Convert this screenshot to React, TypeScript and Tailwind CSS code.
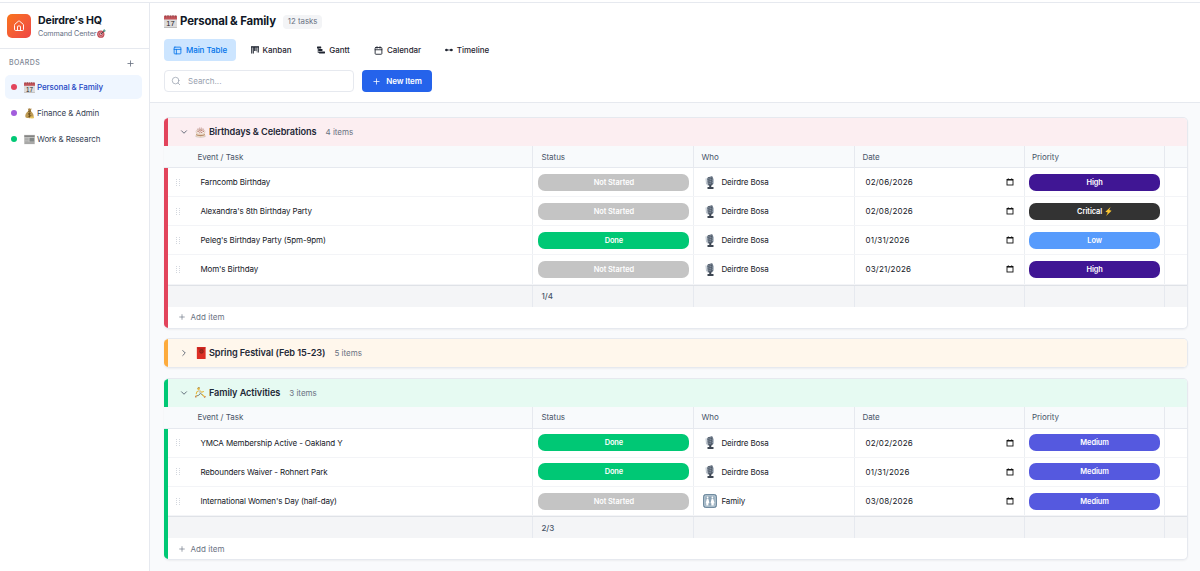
import { useState, type ReactNode } from "react";
import { Calendar, ChevronDown, ChevronRight, House, PanelsTopLeft, Plus, Search } from "lucide-react";

type Task = { name: string; status: string; who: string; date: string; priority: string };

type Group = {
  title: string;
  icon: ReactNode;
  count: number;
  open: boolean;
  bar: string;
  tint: string;
  summary?: string;
  tasks: Task[];
};

const COLS = "grid grid-cols-[365px_161px_160.500px_170px_140px_1fr]";

const statusColors: Record<string, string> = {
  "Not Started": "bg-[#c4c4c4]",
  Done: "bg-[#00c875]",
};

const priorityColors: Record<string, string> = {
  High: "bg-[#401694]",
  Critical: "bg-[#333333]",
  Low: "bg-[#579bfc]",
  Medium: "bg-[#5559df]",
};

function DateEmoji({ className }: { className: string }) {
  return (
    <svg viewBox="0 0 26 26" className={className} aria-hidden>
      <rect x="0" y="1" width="26" height="25" rx="1.5" fill="#dddbdb" />
      <path d="M0 9V1.500h26V9Z" fill="#c4545a" />
      <path d="M3 1v4M8 0v5M13 1v4M18 0v5M23 1v4" stroke="#8e474c" strokeWidth="1.6" />
      <path d="M0 25h26" stroke="#aaa" strokeWidth="1.2" />
      <text x="13" y="22.500" textAnchor="middle" fontSize="15" fontFamily="Liberation Sans, sans-serif" fill="#222">17</text>
    </svg>
  );
}

function MoneyBag({ className }: { className: string }) {
  return (
    <svg viewBox="0 0 26 26" className={className} aria-hidden>
      <path d="M10 7C4 11 2 17 3.500 22c1 2.500 17 3 19 0C24 17 21 11 16 7Z" fill="#bd9a54" />
      <path d="M9 1l2 6h5l2-6-3 1-2-1.500L11 2Z" fill="#a98342" />
      <path d="M9.500 7.500h7" stroke="#5f4318" strokeWidth="2" />
      <path d="M16 13c-1-1.500-6-1.500-6 1s6 1.500 6 4-5 2.500-6.500 1M13 11v11" stroke="#5a4114" strokeWidth="1.500" fill="none" />
      <ellipse cx="19" cy="22.500" rx="5" ry="2.500" fill="#e8c45a" />
    </svg>
  );
}

function Newspaper({ className }: { className: string }) {
  return (
    <svg viewBox="0 0 26 26" className={className} aria-hidden>
      <rect x="0" y="2" width="26" height="22" fill="#c9c9c7" />
      <path d="M1 5h24" stroke="#6d6d6d" strokeWidth="3" />
      <path d="M2 10h9M2 13.500h9M2 17h9M2 20h22M2 22.500h22" stroke="#858585" strokeWidth="1.200" />
      <rect x="13" y="9" width="11" height="9" fill="#828786" />
    </svg>
  );
}

function Cake({ className }: { className: string }) {
  return (
    <svg viewBox="0 0 26 26" className={className} aria-hidden>
      <ellipse cx="13" cy="21.500" rx="12.500" ry="4" fill="#d3cbc5" />
      <path d="M2.500 11v9.500c3 4 18 4 21 0V11Z" fill="#f0dcc6" />
      <path d="M2.500 16.500c4 3.500 17 3.500 21 0v2.500c-4 3.500-17 3.500-21 0Z" fill="#b68a69" />
      <ellipse cx="13" cy="11" rx="10.500" ry="6" fill="#fbf1e8" stroke="#b9a394" />
      <path d="M7 10V3M11 8V1M15 8V1M19 10V3M13 12V5" stroke="#b9837b" strokeWidth="1.300" />
      <path d="M6 11h2.500M10.500 13.500h2M15 13h2M18.500 10.500h2M9 9h2M15 8.500h2" stroke="#93372e" strokeWidth="2" />
    </svg>
  );
}

function RedEnvelope({ className }: { className: string }) {
  return (
    <svg viewBox="0 0 26 26" className={className} aria-hidden>
      <rect x="4" y="0" width="19" height="26" rx="1.200" fill="#dd2f25" />
      <path d="M4 1c3 8 16 8 19 0" fill="#c3211c" />
      <circle cx="14" cy="9.500" r="4" fill="#b3221c" stroke="#6e2a1a" strokeWidth="1.500" />
      <path d="M14 8l3-3" stroke="#7f3a22" strokeWidth="1.500" />
    </svg>
  );
}

function Runner({ className }: { className: string }) {
  return (
    <svg viewBox="0 0 26 26" className={className} aria-hidden fill="none" strokeLinecap="round" strokeLinejoin="round">
      <circle cx="8.500" cy="4" r="3" fill="#e8b93f" />
      <path d="M6.500 2.500a3 3 0 0 1 4-1" stroke="#7d5f34" strokeWidth="1.500" />
      <path d="M8 9l-4 3-1 4M12 9l4 3.500 4-2" stroke="#e8b93f" strokeWidth="2.500" />
      <path d="M10 9l3 6" stroke="#c9cfcd" strokeWidth="4" />
      <path d="M12 16l-3 3.500-5 1.500M14 16l4 3" stroke="#6f7a80" strokeWidth="2.200" />
      <path d="M4 21l-2.500 1M17 18l5.500 5" stroke="#e8b93f" strokeWidth="2.800" />
      <path d="M1.500 22l.5 2.500M22 24.500l3-1.500" stroke="#c46b52" strokeWidth="2" />
    </svg>
  );
}

function Microphone({ className }: { className: string }) {
  return (
    <svg viewBox="0 0 20 26" className={className} aria-hidden>
      <path d="M2 5l1 11c2 4 12 4 14-1V5" fill="none" stroke="#a5b1bd" strokeWidth="1.600" />
      <path d="M6 2.500L14 .5l2 2v13l-2 3H7l-2-3L4 5Z" fill="#5c6877" />
      <path d="M4.500 5.500l11-3M4.500 9l11-3M5 12.500l11-3M5 16l11-3" stroke="#aab7c4" strokeWidth="1.300" />
      <path d="M8 2v16M12.500 1.500v16" stroke="#2c3541" strokeWidth="1" />
      <path d="M10.500 18v5M5 24h12" stroke="#3d4652" strokeWidth="4" />
    </svg>
  );
}

function Restroom({ className }: { className: string }) {
  return (
    <svg viewBox="0 0 26 26" className={className} aria-hidden>
      <rect x="1" y="1" width="24" height="24" rx="3.500" fill="#8ba3b5" stroke="#58788f" strokeWidth="1.500" />
      <rect x="3.500" y="3.500" width="19" height="19" rx="1.500" fill="none" stroke="#dfe8ee" strokeWidth="1.200" />
      <circle cx="8.500" cy="6.500" r="1.700" fill="#fff" />
      <circle cx="17.500" cy="6.500" r="1.700" fill="#fff" />
      <path d="M7 9h3l2 8h-2v4.500H6V17H5ZM16 9h3l2.500 8H20v4.500h-4.500V17H14Z" fill="#fff" />
    </svg>
  );
}

function Target({ className }: { className: string }) {
  return (
    <svg viewBox="0 0 26 26" className={className} aria-hidden>
      <circle cx="11" cy="15" r="10.500" fill="#c24650" />
      <circle cx="11" cy="15" r="6.500" fill="none" stroke="#e5cdd0" strokeWidth="1.500" />
      <circle cx="11" cy="15" r="2.500" fill="#e5cdd0" />
      <path d="M11 15L20 6" stroke="#37464c" strokeWidth="2.500" />
      <path d="M18 8V3l4-3v4h4l-3 4Z" fill="#44917e" />
    </svg>
  );
}

function Bolt({ className }: { className: string }) {
  return (
    <svg viewBox="0 0 20 26" className={className} aria-hidden>
      <path d="M16 0L1 14l7 2-5 10L19 11l-7-2Z" fill="#fcc630" />
    </svg>
  );
}

function KanbanIcon({ className }: { className: string }) {
  return (
    <svg viewBox="0 0 16 16" className={className} fill="currentColor" aria-hidden>
      <path d="M1 1h4v14H1ZM6 1h4v9H6ZM11 1h4v12h-4Z" fillOpacity=".4" />
      <path d="M0 .5h16V3H0Z" />
      <path d="M.5 2H2v13H.5ZM4 2h1.500v13H4ZM6.500 2H8v8H6.500ZM9.500 2H11v8H9.500ZM14 2h1.500v11H14Z" />
    </svg>
  );
}

function GanttIcon({ className }: { className: string }) {
  return (
    <svg viewBox="0 0 16 16" className={className} fill="currentColor" aria-hidden>
      <rect x="0" y="1" width="8.500" height="4" rx=".8" />
      <rect x="2.500" y="5.800" width="8.500" height="4" rx=".8" />
      <rect x="4" y="10.800" width="12" height="4" rx=".8" />
      <path d="M1.500 4v9.500H5V12H3V4Z" />
    </svg>
  );
}

function TimelineIcon({ className }: { className: string }) {
  return (
    <svg viewBox="0 0 16 16" className={className} fill="currentColor" aria-hidden>
      <circle cx="3" cy="8" r="2.500" />
      <circle cx="12.500" cy="8" r="2.500" />
      <path d="M0 7.200h16v1.600H0Z" />
    </svg>
  );
}

function DateIcon() {
  return (
    <svg viewBox="0 0 8 8" className="size-2" fill="none" stroke="#111" aria-hidden>
      <rect x="1" y="1.500" width="6" height="5.500" strokeWidth=".9" />
      <path d="M1 1.900h6" strokeWidth="1.300" />
      <path d="M2.300 .3v1M5.700 .3v1" strokeWidth=".8" />
    </svg>
  );
}

const boards = [
  { name: "Personal & Family", dot: "bg-[#e2445c]", icon: <DateEmoji className="size-[11px]" /> },
  { name: "Finance & Admin", dot: "bg-[#a25ddc]", icon: <MoneyBag className="size-[11px]" /> },
  { name: "Work & Research", dot: "bg-[#00c875]", icon: <Newspaper className="size-[11px]" /> },
];

const tabs = [
  { label: "Main Table", width: "w-[72px]", icon: <PanelsTopLeft className="size-[9px]" strokeWidth={2.2} /> },
  { label: "Kanban", width: "w-[64px]", icon: <KanbanIcon className="size-2" /> },
  { label: "Gantt", width: "w-[55px]", icon: <GanttIcon className="size-2" /> },
  { label: "Calendar", width: "w-[67px]", icon: <Calendar className="size-[9px]" strokeWidth={2.4} /> },
  { label: "Timeline", width: "w-[66px]", icon: <TimelineIcon className="size-2" /> },
];

const groups: Group[] = [
  {
    title: "Birthdays & Celebrations",
    icon: <Cake className="size-[11px]" />,
    count: 4,
    open: true,
    bar: "bg-[#e2445c]",
    tint: "bg-[#fceef1]",
    summary: "1/4",
    tasks: [
      { name: "Farncomb Birthday", status: "Not Started", who: "Deirdre Bosa", date: "02/06/2026", priority: "High" },
      { name: "Alexandra's 8th Birthday Party", status: "Not Started", who: "Deirdre Bosa", date: "02/08/2026", priority: "Critical" },
      { name: "Peleg's Birthday Party (5pm-9pm)", status: "Done", who: "Deirdre Bosa", date: "01/31/2026", priority: "Low" },
      { name: "Mom's Birthday", status: "Not Started", who: "Deirdre Bosa", date: "03/21/2026", priority: "High" },
    ],
  },
  {
    title: "Spring Festival (Feb 15-23)",
    icon: <RedEnvelope className="size-3" />,
    count: 5,
    open: false,
    bar: "bg-[#fdab3d]",
    tint: "bg-[#fff7ec]",
    tasks: [],
  },
  {
    title: "Family Activities",
    icon: <Runner className="size-[11px]" />,
    count: 3,
    open: true,
    bar: "bg-[#00c875]",
    tint: "bg-[#e6faf2]",
    summary: "2/3",
    tasks: [
      { name: "YMCA Membership Active - Oakland Y", status: "Done", who: "Deirdre Bosa", date: "02/02/2026", priority: "Medium" },
      { name: "Rebounders Waiver - Rohnert Park", status: "Done", who: "Deirdre Bosa", date: "01/31/2026", priority: "Medium" },
      { name: "International Women's Day (half-day)", status: "Not Started", who: "Family", date: "03/08/2026", priority: "Medium" },
    ],
  },
];

function Sidebar() {
  return (
    <aside className="w-[150px] shrink-0 border-r border-[#e6e9ef] bg-white">
      <div className="flex h-[46px] items-center gap-[7px] border-b border-[#e6e9ef] px-[7px]">
        <div className="flex size-6 items-center justify-center rounded-[5px] bg-gradient-to-br from-[#f97316] to-[#ef4444]">
          <House className="size-3 text-white" strokeWidth={1.9} />
        </div>
        <div className="pt-[3px] whitespace-nowrap">
          <div className="text-[10.6px] leading-[13px] font-bold tracking-[-0.16px] text-[#111827]">Deirdre's HQ</div>
          <div className="flex items-center gap-[1px] text-[7.2px] leading-[13px] tracking-[-0.1px] text-[#667085]">
            Command Center <Target className="size-[9px]" />
          </div>
        </div>
      </div>
      <div className="flex h-[26px] items-center justify-between pt-[2px] pr-[14px] pl-[9px]">
        <span className="text-[7px] font-medium tracking-[0.4px] text-[#7e8795]">BOARDS</span>
        <Plus className="size-[9px] text-gray-500" strokeWidth={2.2} />
      </div>
      <nav className="flex flex-col gap-[2px] pr-[7px] pl-[5px]">
        {boards.map((b, i) => (
          <a
            key={b.name}
            href="#"
            className={`flex h-6 items-center rounded-[5px] pl-[6px] text-[8px] tracking-[-0.1px] whitespace-nowrap ${
              i === 0 ? "bg-[#eff6ff] font-medium text-[#2448c4]" : "text-[#364152]"
            }`}
          >
            <span className={`mr-[7px] size-[6px] rounded-full ${b.dot}`} />
            {b.icon}
            <span className="ml-[2px]">{b.name}</span>
          </a>
        ))}
      </nav>
    </aside>
  );
}

function Header() {
  return (
    <header className="h-[100px] border-b border-[#e6e9ef] bg-white pt-[11px] pl-[14px]">
      <div className="flex h-[15px] items-center">
        <DateEmoji className="size-[13px]" />
        <h1 className="ml-[3px] text-[11.4px] font-bold tracking-[-0.16px] text-[#111827]">Personal & Family</h1>
        <span className="ml-[7px] flex h-[14px] items-center rounded-sm bg-[#f3f4f6] px-[5px] text-[7.8px] text-gray-500">
          12 tasks
        </span>
      </div>
      <div className="mt-[10px] flex h-[22px] gap-[3px]">
        {tabs.map((t, i) => (
          <button
            key={t.label}
            className={`flex items-center justify-center gap-1 rounded text-[8px] font-medium tracking-[-0.04px] whitespace-nowrap ${t.width} ${
              i === 0 ? "bg-[#cce5ff] text-[#0073ea]" : "text-[#1f2430]"
            }`}
          >
            {t.icon}
            {t.label}
          </button>
        ))}
      </div>
      <div className="mt-[9px] flex h-[22px] items-stretch gap-2">
        <div className="flex w-[190px] items-center gap-[7px] rounded border border-[#e6e9ef] pl-[6px] text-[8px] text-gray-400">
          <Search className="size-[10px]" strokeWidth={1.8} />
          Search...
        </div>
        <button className="flex w-[70px] items-center justify-center gap-[5px] rounded bg-[#2563eb] text-[8px] font-semibold tracking-[-0.1px] text-white">
          <Plus className="size-[9px]" strokeWidth={2} />
          New Item
        </button>
      </div>
    </header>
  );
}

function Pill({ color, children }: { color: string; children: ReactNode }) {
  return (
    <span className={`flex h-[17px] w-full items-center justify-center rounded-[7px] text-[7.4px] font-semibold tracking-[-0.05px] text-white ${color}`}>
      {children}
    </span>
  );
}

function TaskRow({ task }: { task: Task }) {
  return (
    <div className={`${COLS} h-[29.150px] border-b border-[#f3f4f7] text-[8px] tracking-[-0.12px] text-[#15181f]`}>
      <div className="flex items-center border-r border-[#eceff3] pl-2">
        <svg viewBox="0 0 4 7" className="mr-5 h-[7px] w-1" fill="#d3d7de" aria-hidden>
          <path d="M0 0h1v1H0ZM3 0h1v1H3ZM0 2h1v1H0ZM3 2h1v1H3ZM0 4h1v1H0ZM3 4h1v1H3ZM0 6h1v1H0ZM3 6h1v1H3Z" />
        </svg>
        {task.name}
      </div>
      <div className="flex items-center border-r border-[#eceff3] pr-1 pl-[5px]">
        <Pill color={statusColors[task.status]}>{task.status}</Pill>
      </div>
      <div className="flex items-center border-r border-[#eceff3] pl-[9px]">
        <span className="mr-1 flex w-[14px] justify-center">
          {task.who === "Family" ? <Restroom className="size-[14px]" /> : <Microphone className="h-[13px] w-[10px]" />}
        </span>
        {task.who}
      </div>
      <div className="flex items-center justify-between border-r border-[#eceff3] pr-[10px] pl-[10.500px] tracking-[0.22px]">
        {task.date}
        <DateIcon />
      </div>
      <div className="flex items-center border-r border-[#eceff3] pr-1 pl-[4.500px]">
        <Pill color={priorityColors[task.priority]}>
          {task.priority}
          {task.priority === "Critical" && <Bolt className="ml-[3px] h-[9px] w-[7px]" />}
        </Pill>
      </div>
      <div />
    </div>
  );
}

function GroupCard({ group }: { group: Group }) {
  const [open, setOpen] = useState(group.open);
  const Chevron = open ? ChevronDown : ChevronRight;

  return (
    <section className="overflow-hidden rounded-[5px] border border-l-0 border-[#e6e9ef] bg-white shadow-xs">
      <div className="flex h-7">
        <span className={`w-1 ${group.bar}`} />
        <button
          onClick={() => setOpen(!open)}
          className={`flex flex-1 items-center pl-[10.500px] text-left ${group.tint}`}
        >
          <Chevron className="mr-[6px] size-[10px] text-gray-600" strokeWidth={2} />
          <span className="flex w-3">{group.icon}</span>
          <span className="ml-[2px] text-[9.200px] font-semibold tracking-[-0.09px] text-[#1f2937]">{group.title}</span>
          <span className="ml-[9px] text-[8px] text-gray-500">{group.count} items</span>
        </button>
      </div>
      {open && (
        <>
          <div className={`${COLS} h-[22px] border-b border-[#e6e9ef] bg-[#f8fafc] pl-1 text-[8px] tracking-[-0.03px] text-[#475467]`}>
            <div className="flex items-center border-r border-[#e6e9ef] pl-[29px]">Event / Task</div>
            <div className="flex items-center border-r border-[#e6e9ef] pl-2">Status</div>
            <div className="flex items-center border-r border-[#e6e9ef] pl-[7px]">Who</div>
            <div className="flex items-center border-r border-[#e6e9ef] pl-[7.500px]">Date</div>
            <div className="flex items-center border-r border-[#e6e9ef] pl-[7px]">Priority</div>
            <div />
          </div>
          <div className="flex">
            <span className={`w-1 ${group.bar}`} />
            <div className="flex-1">
              {group.tasks.map((t) => (
                <TaskRow key={t.name} task={t} />
              ))}
              <div className={`${COLS} h-[22px] border-t border-[#dfe2e7] bg-[#f4f5f7] text-[8px] font-medium text-[#475467]`}>
                <div className="border-r border-[#e6e9ef]" />
                <div className="flex items-center border-r border-[#e6e9ef] pl-2">{group.summary}</div>
                <div className="border-r border-[#e6e9ef]" />
                <div className="border-r border-[#e6e9ef]" />
                <div className="border-r border-[#e6e9ef]" />
                <div />
              </div>
              <button className="flex h-[21px] items-center gap-1 pl-[10px] text-[8px] tracking-[0.05px] text-gray-500">
                <Plus className="size-2" strokeWidth={2} />
                Add item
              </button>
            </div>
          </div>
        </>
      )}
    </section>
  );
}

export default function App() {
  return (
    <div className="h-[571px] overflow-hidden bg-white pt-[2px] font-['Inter','Liberation_Sans',sans-serif]">
      <div className="flex h-full border-t border-[#e6e9ef]">
        <Sidebar />
        <main className="min-w-0 flex-1 bg-[#f9fafc]">
          <Header />
          <div className="flex flex-col gap-[9.600px] pt-[14px] pr-3 pl-[14.400px]">
            {groups.map((g) => (
              <GroupCard key={g.title} group={g} />
            ))}
          </div>
        </main>
      </div>
    </div>
  );
}
